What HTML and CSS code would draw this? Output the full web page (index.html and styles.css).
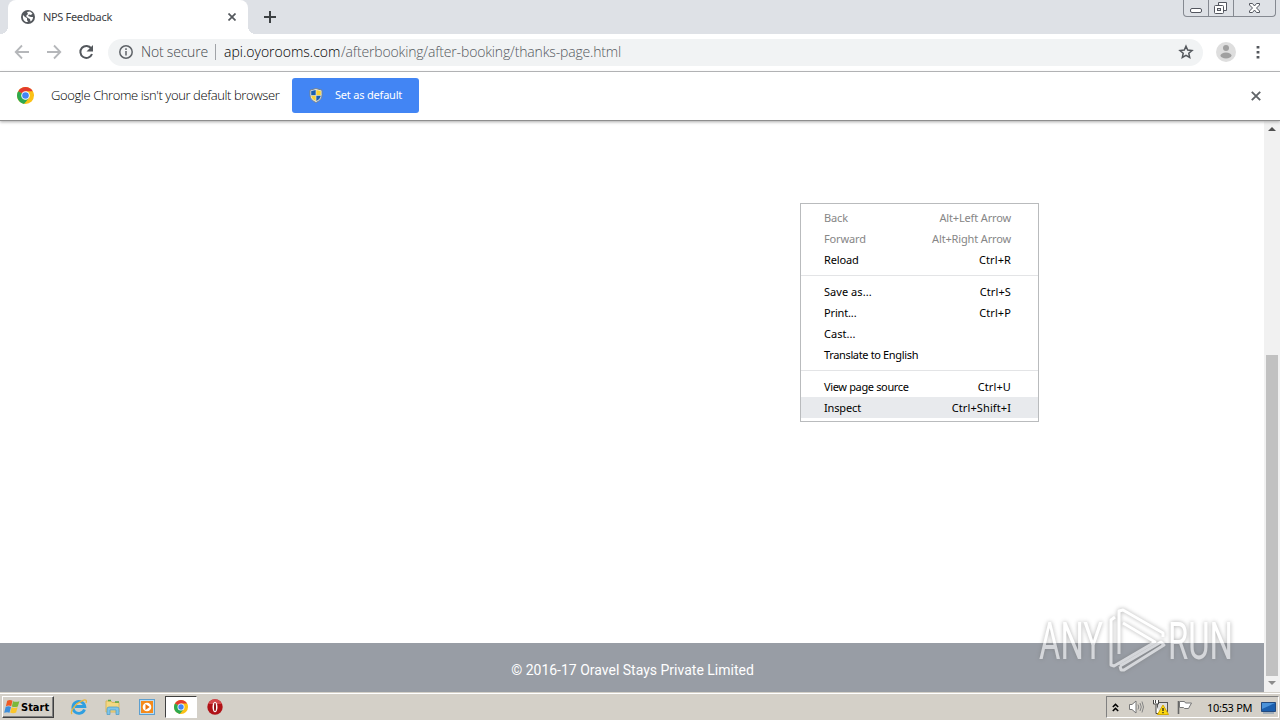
FILE: index.html
```html
<!DOCTYPE html>
<html>
<head>
<meta charset="utf-8">
<title>NPS Feedback</title>
<link rel="stylesheet" href="styles.css">
</head>
<body>

<div class="tabstrip">
	<div class="tab">
		<svg class="globe" width="14" height="14" viewBox="0 0 14 14"><circle cx="7" cy="7" r="7" fill="#54585d"/><path d="M2 5l2 2 2 1v2l1 2-2 0C3 11 1.500 9 2 5zM6 2l3-.5 2.500 2L10 5 8 4.500 7 6l3 1 2 0c0 2-1 3.500-2.500 4.500L9 9 7 8 5 6l2-2z" fill="#fff"/></svg>
		<span class="tab-title">NPS Feedback</span>
		<svg class="tab-close" width="8" height="8" viewBox="0 0 8 8"><path d="M.5.5l7 7M7.500.5l-7 7" stroke="#54585d" stroke-width="1.700"/></svg>
	</div>
	<svg class="newtab" width="12" height="12" viewBox="0 0 12 12"><path d="M6 0v12M0 6h12" stroke="#3c4043" stroke-width="2"/></svg>
	<div class="winbtns">
		<span class="wb"><svg width="24" height="16" viewBox="0 0 24 16"><rect x="6.500" y="8.500" width="11" height="4" rx="1.500" fill="#fff" stroke="#53565f"/></svg></span>
		<span class="wb"><svg width="24" height="16" viewBox="0 0 24 16"><path d="M9.500 2.500h8v8h-3M9.500 5v-2.500" fill="#fff" stroke="#53565f"/><rect x="5.500" y="5.500" width="9" height="8" rx="1" fill="#fff" stroke="#53565f"/><rect x="8.500" y="8.500" width="3" height="2" fill="#dee1e6" stroke="#53565f"/></svg></span>
		<span class="wb wb-close"><svg width="41" height="16" viewBox="0 0 41 16"><path d="M15.500 3.500h3l2 2.500 2-2.500h3v1.500L22.500 8l3 3v1.500h-3l-2-2.500-2 2.500h-3V11l3-3-3-3z" fill="#fff" stroke="#53565f"/></svg></span>
	</div>
</div>

<div class="toolbar">
	<svg class="nav" width="16" height="16" viewBox="0 0 16 16"><path d="M15 8H2M8 1.500L1.700 8 8 14.500" fill="none" stroke="#b5b7ba" stroke-width="1.800"/></svg>
	<svg class="nav" width="16" height="16" viewBox="0 0 16 16"><path d="M1 8h13M8 1.500L14.300 8 8 14.500" fill="none" stroke="#b5b7ba" stroke-width="1.800"/></svg>
	<svg class="nav" width="16" height="16" viewBox="0 0 16 16"><path d="M13.300 4.500A6 6 0 1 0 14 10" fill="none" stroke="#54585d" stroke-width="2"/><path d="M15 1v6.500H8.500z" fill="#54585d"/></svg>
	<div class="omnibox">
		<svg width="14" height="14" viewBox="0 0 14 14"><circle cx="7" cy="7" r="6.200" fill="none" stroke="#5f6368" stroke-width="1.500"/><path d="M7 6v4.500M7 3.300v1.600" stroke="#5f6368" stroke-width="1.500"/></svg>
		<span class="notsecure">Not secure</span>
		<span class="divider"></span>
		<span class="host">api.oyorooms.com</span><span class="path">/afterbooking/after-booking/thanks-page.html</span>
		<svg class="star" width="16" height="16" viewBox="0 0 16 16"><path d="M8 2.200l1.700 3.900 4.300.4-3.200 2.800.9 4.200L8 11.300l-3.700 2.200.9-4.200L2 6.500l4.300-.4z" fill="none" stroke="#54585d" stroke-width="1.500"/></svg>
	</div>
	<svg class="avatar" width="20" height="20" viewBox="0 0 20 20"><circle cx="10" cy="10" r="10" fill="#dedede"/><circle cx="10" cy="6" r="3" fill="#a0a0a0"/><ellipse cx="10" cy="13.500" rx="5.500" ry="3" fill="#a0a0a0"/></svg>
	<svg class="dots" width="4" height="14" viewBox="0 0 4 14"><path d="M.6 1h2.800v2.600H.6zM.6 6h2.800v2.600H.6zM.6 11h2.800v2.600H.6z" fill="#54585d"/></svg>
</div>

<div class="infobar">
	<svg class="chrome-logo" width="17" height="17" viewBox="0 0 16 16"><use href="#chrome"/></svg>
	<span class="info-text">Google Chrome isn't your default browser</span>
	<div class="default-btn">
		<svg width="14" height="15" viewBox="0 0 14 15"><path d="M7 .5l6 1.700v4.500c0 4-3 6.500-6 7.800C4 13.200 1 10.700 1 6.700V2.200z" fill="#e8edf0" stroke="#77838c"/><path d="M6.700 2v5.300H2.200V3z" fill="#1b5fb0"/><path d="M7.300 2v5.300h4.500V3z" fill="#f8d237"/><path d="M6.700 7.700v5.200C4 11.600 2.500 10 2.200 7.700z" fill="#f8d237"/><path d="M7.300 7.700v5.200c2.700-1.300 4.200-2.900 4.500-5.200z" fill="#1b5fb0"/></svg>
		<span class="btn-text">Set as default</span>
	</div>
	<svg class="info-close" width="10" height="10" viewBox="0 0 10 10"><path d="M.8.8l8.400 8.400M9.200.8L.8 9.200" stroke="#606468" stroke-width="1.900"/></svg>
</div>

<div class="content">
	<div class="page">
		<div class="footer"><span>© 2016-17 Oravel Stays Private Limited</span></div>
	</div>
	<div class="scrollbar">
		<svg class="arrow" width="8" height="4" viewBox="0 0 8 4"><path d="M0 4l4-4 4 4z" fill="#505050"/></svg>
		<div class="thumb"></div>
		<svg class="arrow" width="8" height="4" viewBox="0 0 8 4"><path d="M0 0l4 4 4-4z" fill="#8c8c8c"/></svg>
	</div>

	<!-- Right click menu -->
	<div class="menu">
		<div class="item off"><span>Back</span><span>Alt+Left Arrow</span></div>
		<div class="item off"><span>Forward</span><span>Alt+Right Arrow</span></div>
		<div class="item"><span>Reload</span><span class="key">Ctrl+R</span></div>
		<div class="sep"></div>
		<div class="item"><span class="dotted">Save as...</span><span class="key">Ctrl+S</span></div>
		<div class="item"><span>Print...</span><span class="key">Ctrl+P</span></div>
		<div class="item"><span class="dotted">Cast...</span></div>
		<div class="item"><span class="long">Translate to English</span></div>
		<div class="sep"></div>
		<div class="item"><span class="long">View page source</span><span class="key">Ctrl+U</span></div>
		<div class="item hover"><span>Inspect</span><span class="key">Ctrl+Shift+I</span></div>
	</div>

	<!-- Watermark -->
	<svg class="watermark" width="200" height="70" viewBox="0 0 200 70">
		<g class="wm-text">
			<text x="3" y="54" textLength="64" lengthAdjust="spacingAndGlyphs">ANY</text>
			<text x="132" y="54" textLength="65" lengthAdjust="spacingAndGlyphs">RUN</text>
		</g>
		<path d="M79 12l-4 3v45l3 1 41-24-32-19M83 49V6l4-1 40 23v4M84 61l1 4 3 0 40-25-3-3-41 24" fill="none" stroke="#fff" stroke-width="3" stroke-linejoin="round"/>
	</svg>
</div>

<div class="taskbar">
	<div class="start">
		<svg width="17" height="16" viewBox="0 0 16 15"><path d="M3 1.500c2-1 3.500-.8 5 0L6.800 6.800c-1.500-.9-3-.9-5-.1z" fill="#ef5a24"/><path d="M8.500 2c2 .9 3.800.8 6 0l-1.500 5c-2 .8-3.800.8-5.600 0z" fill="#7cb83a"/><path d="M1.600 7.300c2-.8 3.500-.8 5 .1L5.200 13c-1.500-.9-3-.9-5 0z" fill="#3d8edb"/><path d="M7.200 7.700c2 .9 3.500.8 5.600 0l-1.400 5c-2 .9-3.800.8-5.600 0z" fill="#fbc52a"/></svg>
		<span>Start</span>
	</div>
	<div class="task"><svg width="18" height="18" viewBox="0 0 18 18"><path d="M14.500 11.500a6 6 0 1 1 .3-3H5" fill="none" stroke="#2f9fe0" stroke-width="2.800"/><path d="M2 16C-.5 13 6 5 13 2.300c3-1 4 .2 3 2.700" fill="none" stroke="#e9b63c" stroke-width="1.300"/></svg></div>
	<div class="task"><svg width="18" height="18" viewBox="0 0 18 18"><path d="M2 3h5l1 1.500h7V14H2z" fill="#f3d881" stroke="#d9b75c"/><path d="M4 2.500h3M11 4h4" stroke="#58a846" stroke-width="1.500"/><path d="M3 16.500V11q0-2 2-2h8q2 0 2 2v5.500h-3V12H6v4.500z" fill="#7fc5e8" stroke="#4999c7" stroke-width=".7"/></svg></div>
	<div class="task"><svg width="18" height="18" viewBox="0 0 18 18"><rect x="1.500" y="1.500" width="15" height="15" fill="#b9dcf3" stroke="#5d9fcf"/><rect x="3" y="3" width="12" height="12" fill="#f58a1b"/><circle cx="9" cy="9" r="4.300" fill="#fff"/><path d="M7.500 6l4.200 3-4.200 3z" fill="#ea7511"/></svg></div>
	<div class="task active"><svg width="14" height="14" viewBox="0 0 16 16"><g id="chrome"><circle cx="8" cy="8" r="8" fill="#fbc116"/><path d="M8 8L1.100 4A8 8 0 0 1 14.900 4z" fill="#e33b2e"/><path d="M8 8L1.100 4a8 8 0 0 0 5.500 11.900L11.500 10z" fill="#2da94f"/><path d="M8 4h6.900l1 4-4 2z" fill="#fbc116"/><circle cx="8" cy="8" r="4" fill="#fff"/><circle cx="8" cy="8" r="3.100" fill="#4285f4"/></g></svg></div>
	<div class="task"><svg width="18" height="18" viewBox="0 0 18 18"><circle cx="9" cy="9" r="7.700" fill="#b01217"/><path d="M2 6a7.500 7.500 0 0 1 14 0z" fill="#d5484b"/><ellipse cx="9" cy="9" rx="2.500" ry="5.300" fill="#fff"/><ellipse cx="9" cy="9" rx="1" ry="4.300" fill="#8e1013"/></svg></div>

	<div class="tray">
		<svg class="chev" width="7" height="9" viewBox="0 0 7 9"><path d="M.8 4l2.700-2.600L6.200 4M.8 8l2.700-2.600L6.200 8" fill="none" stroke="#000" stroke-width="1.500"/></svg>
		<svg class="vol" width="17" height="16" viewBox="0 0 17 16"><path d="M1.500 5.500h2.500L8 2v12L4 10.500H1.500z" fill="#fff" stroke="#777"/><path d="M10 5.500q1.500 2.500 0 5M12 4q2.500 4 0 8M14 2.500q3 5.500 0 11" fill="none" stroke="#858585"/></svg>
		<svg class="net" width="17" height="16" viewBox="0 0 17 16"><rect x="5.500" y="3.500" width="10" height="9" fill="#ddd" stroke="#555"/><path d="M1.500 1v4h5V1M3.500 1v3M4 5.500v9h4" fill="#fff" stroke="#444"/><path d="M11 6l5.500 9.500h-11z" fill="#fbd80f" stroke="#d5aa00"/><path d="M11 9v3M11 13v1.300" stroke="#222" stroke-width="1.300"/></svg>
		<svg class="flag" width="17" height="16" viewBox="0 0 17 16"><path d="M2.500 15V2" stroke="#666" stroke-width="1.600"/><path d="M3.500 2.500h5l1 1.500h6l-3 5.500h-4l-1-1h-4z" fill="#fff" stroke="#777"/></svg>
		<span class="clock">10:53 PM</span>
		<svg class="desk" width="15" height="13" viewBox="0 0 15 13"><path d="M.5 1.500h14v9H.5z" fill="#1b5fae" stroke="#234a7e"/><path d="M1 2h13L1 8z" fill="#4b93da"/><path d="M2 12h11" stroke="#6e8dad"/></svg>
	</div>
</div>

</body>
</html>
```
FILE: styles.css
```css
* {
  box-sizing: border-box;
}

body {
  margin: 0;
  width: 1280px;
  height: 720px;
  overflow: hidden;
  display: flex;
  flex-direction: column;
  font-family: "Noto Sans", sans-serif;
  font-size: 11px;
  background: #fff;
}

svg {
  display: block;
  flex: none;
}

span {
  white-space: nowrap;
}

/* Tabs */
.tabstrip {
  height: 34px;
  flex: none;
  display: flex;
  padding-left: 8px;
  background: #dee1e6;
}

.tab {
  position: relative;
  width: 240px;
  height: 34px;
  display: flex;
  align-items: center;
  padding: 0 12px 0 13px;
  background: #fff;
  border-radius: 8px 8px 0 0;
}

.tab:before, .tab:after {
  content: "";
  position: absolute;
  bottom: 0;
  left: -8px;
  width: 8px;
  height: 8px;
  background: radial-gradient(circle at 0 0, transparent 8px, #fff 8px);
}

.tab:after {
  left: 240px;
  background: radial-gradient(circle at 100% 0, transparent 8px, #fff 8px);
}

.tab-title {
  margin: 0 0 2px 8px;
  letter-spacing: -.33px;
  color: #3c4043;
}

.tab-close {
  margin-left: auto;
}

.newtab {
  margin: 11px 0 0 16px;
}

.winbtns {
  display: flex;
  height: 17px;
  margin: 0 4px 0 auto;
  border: 1px solid #858991;
  border-top: 0;
  border-radius: 0 0 4px 4px;
}

.wb + .wb {
  border-left: 1px solid #858991;
}

/* Toolbar */
.toolbar {
  height: 38px;
  flex: none;
  display: flex;
  align-items: center;
  padding: 0 20px 1px 14px;
  border-bottom: 1px solid #b3b4b6;
}

.nav {
  margin-right: 16px;
}

.omnibox {
  width: 1095px;
  height: 27px;
  margin-left: -2px;
  padding: 0 9px 0 11px;
  display: flex;
  align-items: center;
  border-radius: 14px;
  background: #f1f3f4;
  font-family: "Open Sans", sans-serif;
  font-size: 14px;
  font-weight: 300;
}

.notsecure {
  margin: 0 0 2px 8px;
  width: 67px;
  letter-spacing: -.2px;
  color: #44484d;
}

.divider {
  width: 1px;
  height: 16px;
  margin: 0 8px 0 7px;
  background: #a0a3a7;
}

.host {
  width: 116px;
  margin-bottom: 2px;
  color: #000;
}

.path {
  margin: 0 0 2px 1px;
  letter-spacing: -.16px;
  color: #55595e;
}

.star {
  margin-left: auto;
}

.avatar {
  margin-left: 13px;
}

.dots {
  margin-left: auto;
}

/* Default browser bar */
.infobar {
  position: relative;
  z-index: 1;
  height: 49px;
  flex: none;
  display: flex;
  align-items: center;
  padding: 0 19px 1px 17px;
  background: #fff;
  border-bottom: 1px solid #8e8e8e;
  box-shadow: 0 1px 3px #aaa;
}

.info-text {
  width: 228px;
  margin: 0 0 2px 17px;
  color: #000;
  font-family: "Open Sans", sans-serif;
  font-size: 13px;
  font-weight: 300;
  letter-spacing: -.39px;
}

.default-btn {
  width: 127px;
  height: 35px;
  margin-left: 13px;
  padding-left: 17px;
  display: flex;
  align-items: center;
  border-radius: 3px;
  background: #4285f4;
  color: #fff;
}

.btn-text {
  margin: 0 0 2px 12px;
  letter-spacing: -.2px;
}

.info-close {
  margin-left: auto;
}

/* Page */
.content {
  position: relative;
  height: 571px;
  flex: none;
  display: flex;
}

.page {
  flex: 1;
  display: flex;
  flex-direction: column;
  justify-content: flex-end;
}

.footer {
  height: 49px;
  padding: 4px 0 0 1px;
  display: flex;
  align-items: center;
  justify-content: center;
  background: #989da5;
  color: #fff;
  font-family: Roboto, sans-serif;
  font-size: 14px;
}

.scrollbar {
  width: 16px;
  padding: 6px 0 7px;
  display: flex;
  flex-direction: column;
  align-items: center;
  background: #f1f1f1;
}

.thumb {
  width: 12px;
  height: 321px;
  margin: auto 0 5px;
  background: #c1c1c1;
}

/* Context menu */
.menu {
  position: absolute;
  left: 800px;
  top: 82px;
  width: 239px;
  height: 219px;
  padding: 3px 0 5px;
  background: #fff;
  border: 1px solid #b9bbbd;
}

.item {
  height: 21px;
  padding: 0 27px 0 23px;
  display: flex;
  align-items: center;
  justify-content: space-between;
  letter-spacing: -.15px;
}

.key {
  letter-spacing: .1px;
}

.dotted {
  letter-spacing: .05px;
}

.long {
  letter-spacing: -.35px;
}

.off {
  color: #868686;
}

.hover {
  background: #e8eaed;
}

.sep {
  height: 1px;
  margin: 5px 0;
  background: #e3e4e6;
}

.watermark {
  position: absolute;
  left: 1036px;
  top: 484px;
  overflow: visible;
  opacity: .6;
  filter: drop-shadow(0 0 2px #777);
}

.wm-text {
  font-family: Roboto, sans-serif;
  font-size: 52px;
  fill: #fff;
}

/* Taskbar */
.taskbar {
  height: 28px;
  flex: none;
  display: flex;
  align-items: center;
  padding: 1px 1px 0 2px;
  background: #d4d0c8;
  border-top: 1px solid #d4d0c8;
  box-shadow: inset 0 1px #fff;
}

.start {
  width: 52px;
  height: 22px;
  margin-right: 9px;
  padding-left: 1px;
  display: flex;
  align-items: center;
  border: 1px solid;
  border-color: #fff #404040 #404040 #fff;
  box-shadow: inset -1px -1px #808080;
  font-family: "DejaVu Sans Condensed", "DejaVu Sans", sans-serif;
  font-size: 11px;
  font-weight: bold;
}

.task {
  width: 32px;
  height: 22px;
  margin-right: 2px;
  display: flex;
  align-items: center;
  justify-content: center;
}

.active {
  background: #fff;
  border: 1px solid;
  border-color: #404040 #fff #fff #404040;
}

.tray {
  width: 173px;
  height: 22px;
  margin-left: auto;
  padding: 0 2px 0 5px;
  display: flex;
  align-items: center;
  border: 1px solid;
  border-color: #808080 #fff #fff #808080;
}

.vol {
  margin-left: 9px;
}

.net, .flag {
  margin-left: 7px;
}

.clock {
  width: 46px;
  margin: 0 8px 0 auto;
  letter-spacing: -.3px;
}
```
